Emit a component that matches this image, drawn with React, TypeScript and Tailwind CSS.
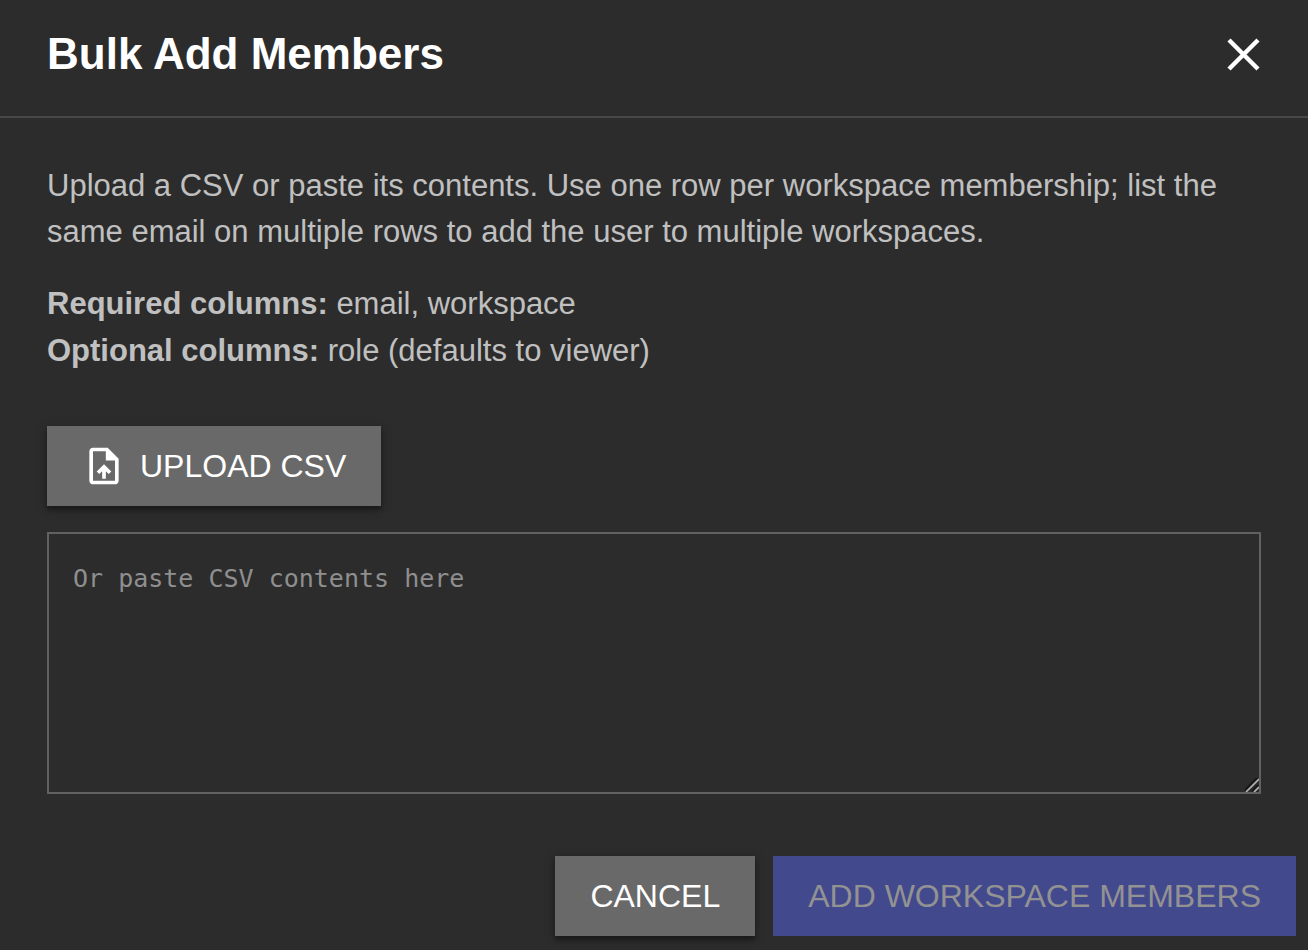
import React, { useRef, useState } from "react";

const CloseIcon = () => (
  <svg viewBox="0 0 34 34" className="size-[34px]" fill="none" stroke="currentColor" strokeWidth="4.4" aria-hidden="true">
    <path d="M2 3l29 29M31 3L2 32" />
  </svg>
);

const UploadFileIcon = () => (
  <svg viewBox="0 0 24 24" className="size-11" fill="currentColor" aria-hidden="true">
    <path d="M14 2H6c-1.1 0-1.99.9-1.99 2L4 20c0 1.1.89 2 1.99 2H18c1.1 0 2-.9 2-2V8l-6-6zm4 18H6V4h7v5h5v11zM8 15.01l1.41 1.41L11 14.84V19h2v-4.16l1.59 1.59L16 15.01 12.01 11z" />
  </svg>
);

const ResizeGrip = () => (
  <svg
    viewBox="0 0 14 14"
    className="absolute right-0.5 bottom-0.5 size-3.5 pointer-events-none"
    fill="none"
    strokeWidth="1.6"
    aria-hidden="true"
  >
    <path d="M-1 13L13 -1M7 13L13 7" stroke="#151515" />
    <path d="M1 14L14 1M9 14L14 9" stroke="#b4b4b4" />
  </svg>
);

const BulkAddMembers: React.FC = () => {
  const [csv, setCsv] = useState("");
  const fileInput = useRef<HTMLInputElement>(null);

  const handleFile = async (e: React.ChangeEvent<HTMLInputElement>) => {
    const file = e.target.files?.[0];
    if (file) setCsv(await file.text());
  };

  return (
    <div className="min-h-screen bg-[#2c2c2c] text-[#c0c0c0] font-['Liberation_Sans',sans-serif]">
      <header className="flex items-center justify-between h-[118px] px-[47px] pb-2 border-b-2 border-[#484848] text-white">
        <h1 className="text-[44px] leading-[60px] font-bold">Bulk Add Members</h1>
        <button type="button" aria-label="Close">
          <CloseIcon />
        </button>
      </header>

      <main className="px-[47px] pt-[45px]">
        <p className="text-[31px] leading-[46px]">
          Upload a CSV or paste its contents. Use one row per workspace
          membership; list the same email on multiple rows to add the user to
          multiple workspaces.
        </p>
        <p className="mt-[25px] text-[31px] leading-[47px]">
          <strong>Required columns:</strong> email, workspace
          <br />
          <strong>Optional columns:</strong> role (defaults to viewer)
        </p>

        <input
          ref={fileInput}
          type="file"
          accept=".csv"
          aria-label="CSV file"
          className="hidden"
          onChange={handleFile}
        />
        <button
          type="button"
          className="flex items-center gap-3.5 h-20 mt-13 px-[35px] bg-[#696969] text-white text-[32px] shadow-[0_4px_4px_rgba(0,0,0,0.3),0_2px_10px_rgba(0,0,0,0.25)]"
          onClick={() => fileInput.current?.click()}
        >
          <UploadFileIcon />
          UPLOAD CSV
        </button>

        <div className="relative mt-[26px]">
          <textarea
            aria-label="CSV contents"
            placeholder="Or paste CSV contents here"
            value={csv}
            onChange={(e) => setCsv(e.target.value)}
            className="block w-full h-[262px] px-6 py-7 border-2 border-[#616161] bg-transparent font-['DejaVu_Sans_Mono',monospace] text-[25px] leading-[34px] placeholder:text-[#8f8f8f] resize-y outline-none [&::-webkit-resizer]:hidden"
          />
          <ResizeGrip />
        </div>
      </main>

      <footer className="flex justify-end gap-[18px] pt-[62px] pr-3 pb-3.5">
        <button
          type="button"
          className="h-20 px-[35px] bg-[#696969] text-white text-[32px] shadow-[0_4px_4px_rgba(0,0,0,0.3),0_2px_10px_rgba(0,0,0,0.25)]"
        >
          CANCEL
        </button>
        <button
          type="submit"
          disabled
          className="h-20 px-[35px] bg-[#43498d] text-[#929292] text-[32px]"
        >
          ADD WORKSPACE MEMBERS
        </button>
      </footer>
    </div>
  );
};

export default BulkAddMembers;
